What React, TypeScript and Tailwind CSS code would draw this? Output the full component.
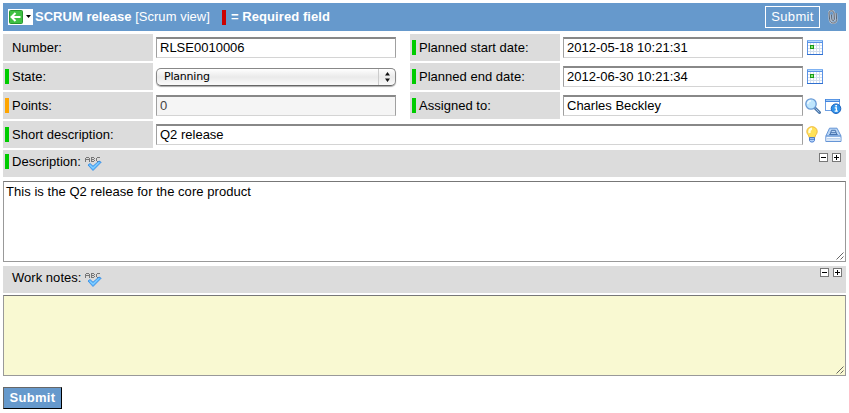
import React from "react";

type Tone = "green" | "orange" | "none";
const tones: Record<Tone, string> = {
  green: "bg-[#00cc00]",
  orange: "bg-[#ffa500]",
  none: "bg-transparent",
};

function Label({ text, tone = "green" }: { text: string; tone?: Tone }) {
  return (
    <div className="flex h-[27px] w-[150px] shrink-0 items-center bg-[#dcdcdc] pl-[2px]">
      <span className={`mr-[3px] h-[15px] w-[4px] ${tones[tone]}`} />
      <span className="whitespace-nowrap leading-[15px] tracking-[0.02px]">{text}</span>
    </div>
  );
}

function Field({ value, wide, readOnly }: { value: string; wide?: boolean; readOnly?: boolean }) {
  return (
    <input
      defaultValue={value}
      readOnly={readOnly}
      className={`ml-[3px] h-[21px] shrink-0 rounded-none border border-t-2 border-[#d4d4d4] border-t-[#888] border-l-[#a0a0a0] border-r-[#a0a0a0] pb-[2px] pl-[3px] outline-none ${
        wide ? "w-[647px]" : "w-[240px]"
      } ${readOnly ? "bg-[#f5f5f5] text-[#444]" : "bg-white"}`}
    />
  );
}

function CalendarIcon() {
  return (
    <svg width="16" height="16" viewBox="0 0 16 16" shapeRendering="crispEdges">
      <rect x="0" y="0" width="16" height="15" fill="#5b93e6" />
      <rect x="0" y="0" width="16" height="1" fill="#7fb2f2" />
      <rect x="1" y="1" width="14" height="1" fill="#b5dafa" />
      <rect x="1" y="3" width="14" height="11" fill="#fff" />
      <rect x="0" y="14" width="16" height="1" fill="#2f6fd0" />
      <path d="M3.5 3v11M6.5 3v11M9.5 3v11M12.5 3v11M1 5.5h14M1 8.5h14M1 11.5h14" stroke="#d3dfee" />
      <rect x="3.5" y="5.5" width="3" height="3" fill="#8fea74" stroke="#1a9a1a" />
    </svg>
  );
}

function SearchIcon() {
  return (
    <svg width="16" height="16" viewBox="0 0 16 16">
      <path d="M10.2 10.2l4.3 4.3" stroke="#4b78ac" strokeWidth="3" strokeLinecap="round" />
      <path d="M10.5 10.5l3.8 3.8" stroke="#a5c2e0" strokeWidth="1" />
      <circle cx="6" cy="6" r="5.2" fill="#bfe6fd" stroke="#6a9bd6" strokeWidth="1.3" />
      <path d="M2.8 6A3.3 3.3 0 0 1 6 2.8" stroke="#eaf8ff" strokeWidth="1.6" fill="none" />
    </svg>
  );
}

function InfoIcon() {
  return (
    <svg width="17" height="16" viewBox="0 0 17 16">
      <rect x=".5" y="1.5" width="14" height="11" fill="#fff" stroke="#6c9fe3" />
      <path d="M0 2.5h15" stroke="#4385df" strokeWidth="3" />
      <path d="M1 2.3h13" stroke="#b5dafa" />
      <circle cx="11" cy="10.7" r="4.8" fill="#2f93ea" stroke="#1f63bd" />
      <path d="M9.7 9.8h1.7v3.3M9.6 13.2h3.2" stroke="#fff" strokeWidth="1.3" fill="none" />
      <rect x="10.3" y="7" width="1.7" height="1.5" fill="#fff" />
    </svg>
  );
}

function BulbIcon() {
  return (
    <svg width="12" height="17" viewBox="0 0 12 17">
      <path d="M6 .7C2.9.7.8 2.8.8 5.6c0 2.5 2.2 3.6 2.4 5.9h5.6c.2-2.3 2.4-3.4 2.4-5.9C11.2 2.8 9.1.7 6 .7z" fill="#ffe25a" stroke="#efb93c" />
      <path d="M3.6 7C3 4.2 4.3 2.8 6 2.8" stroke="#fffde0" strokeWidth="2.4" fill="none" />
      <path d="M3.5 11.5h5v3l-1.2 1.5H4.7l-1.2-1.5z" fill="#b4d2f7" stroke="#3e74cc" strokeWidth=".9" />
      <path d="M3.5 13.3h5" stroke="#3e74cc" strokeWidth=".9" />
    </svg>
  );
}

function BookIcon() {
  return (
    <svg width="17" height="16" viewBox="0 0 17 16">
      <path d="M4.5 1.2h7.5l4 7.8H.9z" fill="#b9d5f5" stroke="#6595d6" />
      <path d="M5.2 7.2l1.3-3.9h3.8l1.4 3.9M6 5.7h5M4.2 7.5h8.5" stroke="#4874b0" fill="none" />
      <path d="M16 9.2H.8v5.3H16z" fill="#f5f9ff" stroke="#6595d6" />
      <path d="M2 11.5h14M2 13h14" stroke="#bdd4ef" />
    </svg>
  );
}

function SpellIcon() {
  return (
    <svg className="ml-[4px] mt-[7px]" width="17" height="15" viewBox="0 0 17 15">
      <g fill="none" stroke="#777" shapeRendering="crispEdges">
        <path d="M.5 5V1M1 .5h3M4.5 1v4M1 2.5h3M6.5 5V0M7 .5h2M9.5 1v1M7 2.5h2M9.5 3v1M7 4.5h2M12 .5h3M11.5 1v3M12 4.5h3" />
      </g>
      <path d="M3 8l2-1.5 3 2.7L14 4l2.2 1.2L8 13.5z" fill="#5dbcff" stroke="#2f86e3" strokeWidth=".8" />
      <path d="M4.8 8.2L8 11.3l5.7-5.6" stroke="#94d5ff" fill="none" />
    </svg>
  );
}

function SizeButton({ plus }: { plus?: boolean }) {
  return (
    <svg width="9" height="9" viewBox="0 0 9 9" shapeRendering="crispEdges">
      <rect x=".5" y=".5" width="8" height="8" fill="#fff" stroke="#777" />
      <path d={plus ? "M2 4.5h5M4.5 2v5" : "M2 4.5h5"} stroke="#000" />
    </svg>
  );
}

function SectionBar({ text, tone, shift }: { text: string; tone: Tone; shift?: boolean }) {
  return (
    <div className="flex h-[27px] items-start bg-[#dcdcdc] pl-[2px]">
      <span className={`mr-[3px] mt-[4px] h-[15px] w-[4px] ${tones[tone]}`} />
      <span className="mt-[4px] leading-[15px] tracking-[0.03px]">{text}</span>
      <SpellIcon />
      <span className={`ml-auto flex gap-[4px] ${shift ? "mr-[4px] pt-[2px]" : "mr-[5px] pt-[3px]"}`}>
        <SizeButton />
        <SizeButton plus />
      </span>
    </div>
  );
}

function TextBox({ value, notes }: { value: string; notes?: boolean }) {
  return (
    <div
      className={`relative h-[81px] border border-[#999] border-t-[#777] pl-[2px] pt-[2px] leading-[15px] tracking-[0.05px] ${
        notes ? "bg-[#f9f9d2]" : "bg-white"
      }`}
    >
      {value}
      <svg className="absolute bottom-[1px] right-[1px]" width="8" height="8" viewBox="0 0 8 8">
        <path d="M.5 7.5l7-7M4.5 7.5l3-3" stroke="#555" strokeWidth=".9" />
      </svg>
    </div>
  );
}

export default function App() {
  return (
    <main className="h-[413px] w-[849px] overflow-hidden bg-white pl-[3px] pt-[3px] font-['Liberation_Sans',Arial,sans-serif] text-[13px] text-black">
      <div className="w-[843px]">
        <header className="flex h-[28px] items-center bg-[#6699cc] text-white">
          <span className="ml-[5px] flex h-[16px] w-[25px] items-center bg-white">
            <svg width="25" height="16" viewBox="0 0 25 16">
              <rect x="1.5" y="1.5" width="13" height="13" rx="1" fill="#3fc043" stroke="#27982e" />
              <path d="M12.5 8H4M7.5 4L3.5 8l4 4" stroke="#fff" strokeWidth="2" fill="none" />
              <path d="M18 6h5l-2.5 3z" fill="#000" />
            </svg>
          </span>
          <span className="ml-[2px] whitespace-nowrap tracking-[0.03px]"><b>SCRUM release</b> [Scrum view]</span>
          <span className="ml-[12px] h-[15px] w-[4px] bg-[#cc0000]" />
          <b className="ml-[5px] whitespace-nowrap tracking-[0.08px]">= Required field</b>
          <button className="ml-auto h-[22px] w-[55px] border border-white pb-px text-center tracking-[0.3px]">Submit</button>
          <svg className="ml-[8px] mr-[8px]" width="10" height="14" viewBox="0 0 10 14" fill="none">
            <path d="M1 3.5v-.3C1 0 5.6 0 6 3l.4 6.2c0 1.8-2.4 1.8-2.6 0L3.4 4.5M1 3.3l.6 6.2c.5 4.7 7.2 4.7 7 0L8.2 3" stroke="#c3cbd6" strokeWidth="2" />
            <path d="M1 3.5v-.3C1 0 5.6 0 6 3l.4 6.2c0 1.8-2.4 1.8-2.6 0L3.4 4.5M1 3.3l.6 6.2c.5 4.7 7.2 4.7 7 0L8.2 3" stroke="#5c6673" strokeWidth="1" />
          </svg>
        </header>

        <div className="mt-[3px] flex flex-col gap-[2px]">
          <div className="flex items-center">
            <Label text="Number:" tone="none" />
            <Field value="RLSE0010006" />
            <span className="w-[14px]" />
            <Label text="Planned start date:" />
            <Field value="2012-05-18 10:21:31" />
            <span className="ml-[4px]"><CalendarIcon /></span>
          </div>
          <div className="flex items-center">
            <Label text="State:" />
            <button className="ml-[3px] flex h-[18px] w-[240px] items-center rounded-[5px] border border-[#888] border-b-[#666] bg-linear-to-b from-white via-[#eaeaea] to-[#fafafa] pl-[7px] font-['DejaVu_Sans',sans-serif] text-[11px] shadow-[0_1px_1px_#aaa]">
              <span className="pt-px tracking-[-0.2px]">Planning</span>
              <span className="ml-auto flex h-full w-[17px] items-center justify-center border-l border-[#ccc]">
                <svg width="5" height="10" viewBox="0 0 5 10">
                  <path d="M0 3.5L2.5 0 5 3.5zM0 6.5h5L2.5 10z" fill="#111" />
                </svg>
              </span>
            </button>
            <span className="w-[14px]" />
            <Label text="Planned end date:" />
            <Field value="2012-06-30 10:21:34" />
            <span className="ml-[4px]"><CalendarIcon /></span>
          </div>
          <div className="flex items-center">
            <Label text="Points:" tone="orange" />
            <Field value="0" readOnly />
            <span className="w-[14px]" />
            <Label text="Assigned to:" />
            <Field value="Charles Beckley" />
            <span className="ml-[2px] flex gap-[4px]"><SearchIcon /><InfoIcon /></span>
          </div>
          <div className="flex items-center">
            <Label text="Short description:" />
            <Field value="Q2 release" wide />
            <span className="ml-[3px] flex items-center gap-[7px]"><BulbIcon /><BookIcon /></span>
          </div>
          <SectionBar text="Description:" tone="green" />
        </div>
        <div className="mt-[4px]"><TextBox value="This is the Q2 release for the core product" /></div>
        <div className="mt-[4px]"><SectionBar text="Work notes:" tone="none" shift /></div>
        <div className="mt-[2px]"><TextBox value="" notes /></div>
        <button className="mt-[11px] block h-[22px] w-[59px] border border-[#666] border-b-black border-r-black bg-[#6699cc] pb-px text-center font-bold tracking-[0.3px] text-white">Submit</button>
      </div>
    </main>
  );
}
